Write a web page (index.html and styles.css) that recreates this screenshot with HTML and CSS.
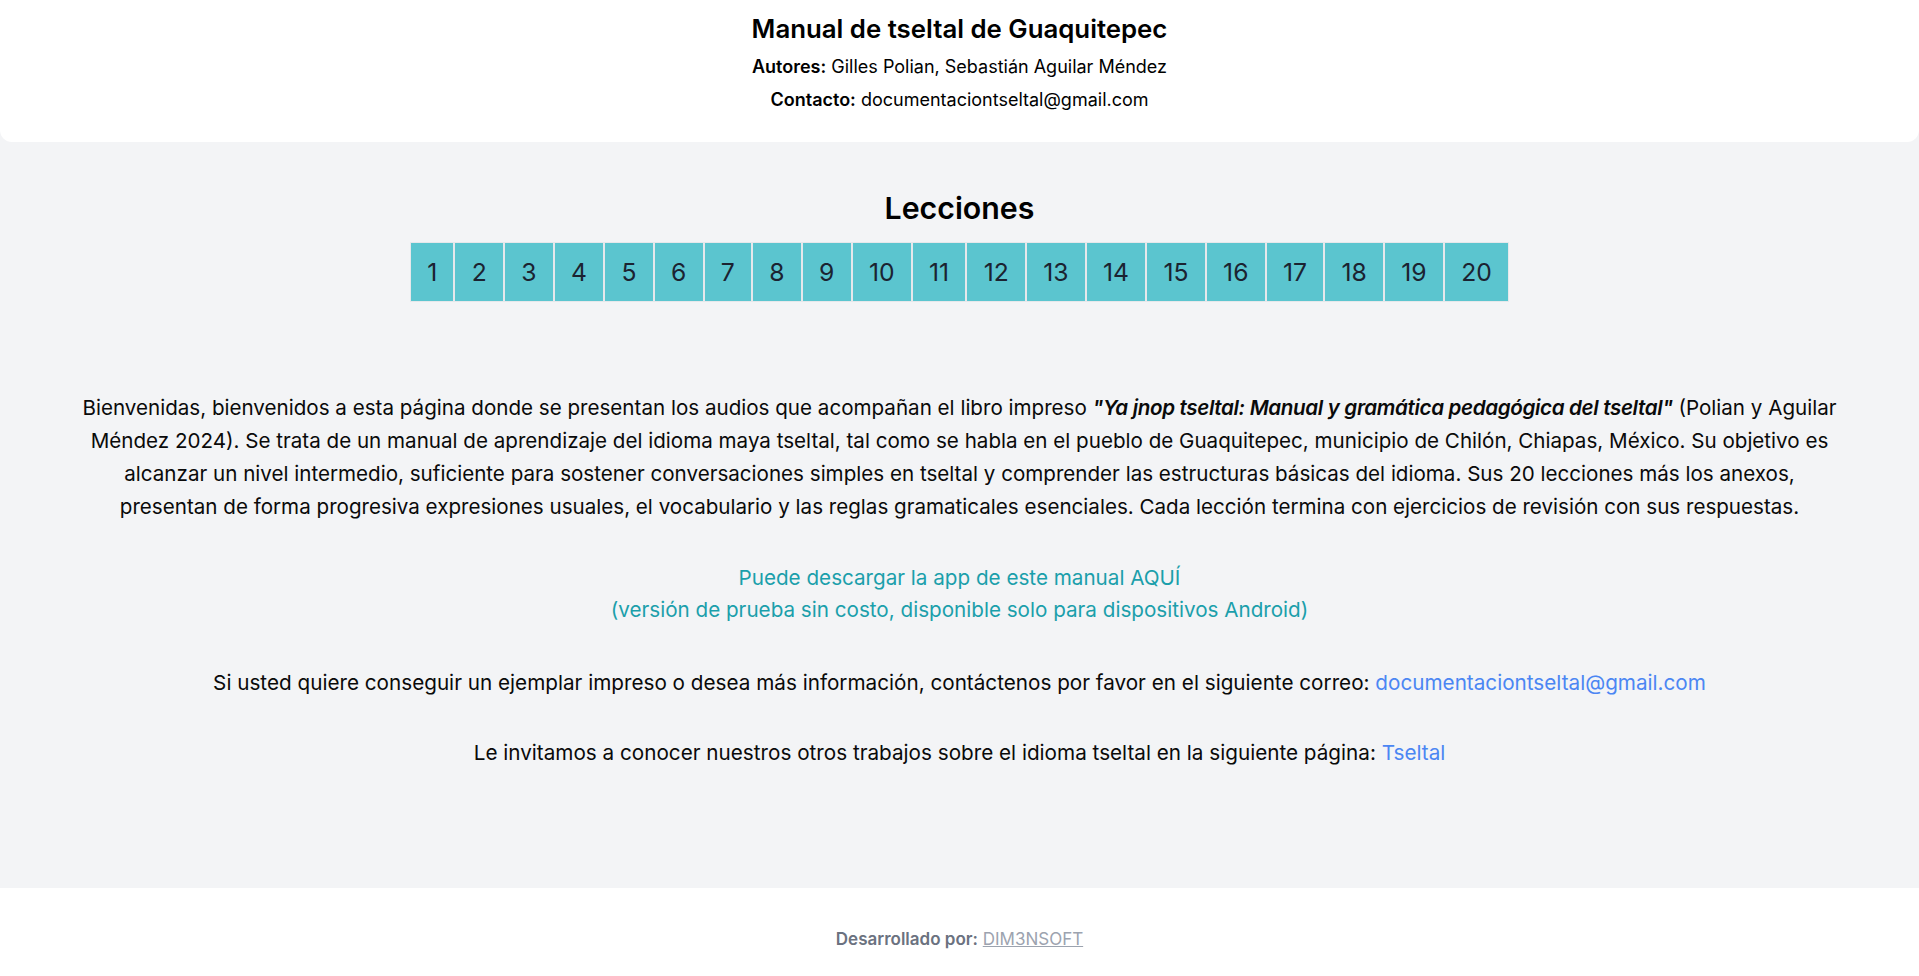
FILE: index.html
```html
<!DOCTYPE html>
<html lang="es">
<head>
<meta charset="utf-8">
<title>Manual de tseltal de Guaquitepec</title>
<link rel="stylesheet" href="styles.css">
</head>
<body>
<header class="site-header">
  <h1 class="site-title">Manual de tseltal de Guaquitepec</h1>
  <p class="meta"><strong>Autores:</strong> Gilles Polian, Sebastián Aguilar Méndez</p>
  <p class="meta"><strong>Contacto:</strong> documentaciontseltal@gmail.com</p>
</header>

<main class="main">
  <h2 class="lessons-title">Lecciones</h2>
  <nav class="lessons">
    <a class="lesson" href="#">1</a>
    <a class="lesson" href="#">2</a>
    <a class="lesson" href="#">3</a>
    <a class="lesson" href="#">4</a>
    <a class="lesson" href="#">5</a>
    <a class="lesson" href="#">6</a>
    <a class="lesson" href="#">7</a>
    <a class="lesson" href="#">8</a>
    <a class="lesson" href="#">9</a>
    <a class="lesson" href="#">10</a>
    <a class="lesson" href="#">11</a>
    <a class="lesson" href="#">12</a>
    <a class="lesson" href="#">13</a>
    <a class="lesson" href="#">14</a>
    <a class="lesson" href="#">15</a>
    <a class="lesson" href="#">16</a>
    <a class="lesson" href="#">17</a>
    <a class="lesson" href="#">18</a>
    <a class="lesson" href="#">19</a>
    <a class="lesson" href="#">20</a>
  </nav>

  <p class="intro">Bienvenidas, bienvenidos a esta página donde se presentan los audios que acompañan el libro impreso <em class="book">"Ya jnop tseltal: Manual y gramática pedagógica del tseltal"</em> (Polian y Aguilar<br>Méndez 2024). Se trata de un manual de aprendizaje del idioma maya tseltal, tal como se habla en el pueblo de Guaquitepec, municipio de Chilón, Chiapas, México. Su objetivo es<br>alcanzar un nivel intermedio, suficiente para sostener conversaciones simples en tseltal y comprender las estructuras básicas del idioma. Sus 20 lecciones más los anexos,<br>presentan de forma progresiva expresiones usuales, el vocabulario y las reglas gramaticales esenciales. Cada lección termina con ejercicios de revisión con sus respuestas.</p>

  <a class="app-link" href="#">Puede descargar la app de este manual AQUÍ<br>(versión de prueba sin costo, disponible solo para dispositivos Android)</a>

  <p class="note note-first">Si usted quiere conseguir un ejemplar impreso o desea más información, contáctenos por favor en el siguiente correo: <a class="link" href="#">documentaciontseltal@gmail.com</a></p>

  <p class="note">Le invitamos a conocer nuestros otros trabajos sobre el idioma tseltal en la siguiente página: <a class="link" href="#">Tseltal</a></p>
</main>

<footer class="site-footer">
  <span class="credit">Desarrollado por:</span> <a class="credit-link" href="#">DIM3NSOFT</a>
</footer>
</body>
</html>
```
FILE: styles.css
```css
* { box-sizing: border-box; }

html, body {
  margin: 0;
  padding: 0;
}

body {
  background: #f3f4f6;
  font-family: "Inter", "Noto Sans", sans-serif;
  color: #0a0a0a;
}

.site-header {
  background: #ffffff;
  border-radius: 0 0 12px 12px;
  padding: 13px 0 26px;
  text-align: center;
}

.site-title {
  margin: 0 0 6px;
  font-size: 25.8px;
  line-height: 32px;
  font-weight: 600;
  color: #000;
}

.meta {
  margin: 0;
  font-size: 18px;
  line-height: 32.5px;
  color: #000;
}

.meta strong {
  font-weight: 600;
}

.main {
  padding: 48px 40px 121px;
  display: flex;
  flex-direction: column;
  align-items: center;
  text-align: center;
}

.lessons-title {
  margin: 0;
  font-size: 30.3px;
  line-height: 36px;
  font-weight: 600;
  color: #000;
}

.lessons {
  margin-top: 16px;
  display: flex;
}

.lesson {
  display: block;
  padding: 16px 16.25px;
  font-size: 24.7px;
  line-height: 26px;
  background: #5bc5cf;
  border: 1px solid #e6e8eb;
  color: #1b2331;
  text-decoration: none;
}

.intro {
  margin: 89px 0 0;
  font-size: 20.6px;
  line-height: 33px;
  color: #0a0a0a;
}

.book {
  font-weight: 600;
  letter-spacing: -0.35px;
}

.app-link {
  display: block;
  margin-top: 39px;
  font-size: 20.65px;
  line-height: 32px;
  color: #1b9fab;
  text-decoration: none;
}

.note {
  margin: 42px 0 0;
  font-size: 20.7px;
  line-height: 28px;
  color: #0a0a0a;
}

.note-first {
  margin-top: 43px;
}

.link {
  color: #4b86f3;
  text-decoration: none;
}

.site-footer {
  background: #ffffff;
  padding: 39px 0 25px;
  text-align: center;
  font-size: 17px;
  line-height: 24px;
}

.credit {
  font-weight: 600;
  color: #6b7280;
}

.credit-link {
  color: #9ca3af;
  text-decoration: underline;
}
```
